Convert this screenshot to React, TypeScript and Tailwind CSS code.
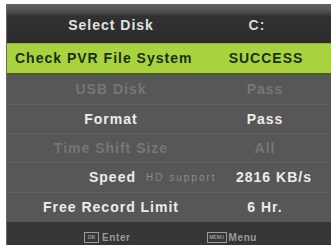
import React from "react";

const font = { fontFamily: '"Liberation Sans", Arial, sans-serif' };

function Row({
  label,
  value,
  dim,
  border = true,
  h = "h-[29px]",
}: {
  label: string;
  value: string;
  dim?: boolean;
  border?: boolean;
  h?: string;
}) {
  const c = dim ? "text-[#767676]" : "text-[#ececec]";
  return (
    <div className={`${h} grid grid-cols-[208px_100px] items-center ${border ? "border-t border-[#606060]" : ""}`}>
      <div className={`text-center ${c}`}>{label}</div>
      <div className={`text-center ${c}`}>{value}</div>
    </div>
  );
}

export default function App() {
  return (
    <div className="w-[331px] h-[245px] bg-white pt-[4px] pl-[6px] overflow-hidden" style={font}>
      <div className="w-[325px] h-[241px] flex flex-col bg-[#575757] border-l border-[#6a6a6a] text-[14px] font-bold tracking-[1px]">
        {/* header */}
        <div className="h-[39px] grid grid-cols-[208px_100px] items-center bg-[linear-gradient(to_bottom,#636363_0%,#4a4a4a_22%,#313131_32%,#2b2b2b_100%)] pt-[3px]">
          <div className="text-center text-[#e2e2e2]">Select Disk</div>
          <div className="text-center text-[#d8d8d8] pr-[16px]">C:</div>
        </div>
        {/* selected */}
        <div className="h-[32px] grid grid-cols-[208px_112px] items-center bg-[#a8d33e] border-t border-[#8fb834] border-b-2 border-b-[#4a5a2a] text-[#1c2e12]">
          <div className="pl-[8px]">Check PVR File System</div>
          <div className="text-center pr-[10px]">SUCCESS</div>
        </div>
        <Row label="USB Disk" value="Pass" dim border={false} />
        <Row label="Format" value="Pass" />
        <Row label="Time Shift Size" value="All" dim />
        <div className="h-[30px] flex items-center border-t border-[#606060] text-[#ececec]">
          <div className="w-[129px] text-right">Speed</div>
          <div className="ml-[10px] w-[73px] text-[10px] font-normal tracking-[2px] text-[#8c8c8c] whitespace-nowrap">HD support</div>
          <div className="ml-[17px]">2816 KB/s</div>
        </div>
        <Row label="Free Record Limit" value="6 Hr." h="h-[30px]" />
        {/* footer */}
        <div className="flex-1 bg-[#363636] flex items-end text-[10px] tracking-[0.6px] text-[#9a9a9a]">
          <div className="ml-[77px] flex items-center">
            <span className="w-[15px] h-[11px] border border-[#9a9a9a] text-[5px] flex items-center justify-center tracking-normal">OK</span>
            <span className="ml-[3px]">Enter</span>
          </div>
          <div className="ml-[76px] flex items-center">
            <span className="w-[20px] h-[11px] border border-[#9a9a9a] text-[5px] flex items-center justify-center tracking-normal">MENU</span>
            <span className="ml-[2px]">Menu</span>
          </div>
        </div>
      </div>
    </div>
  );
}
